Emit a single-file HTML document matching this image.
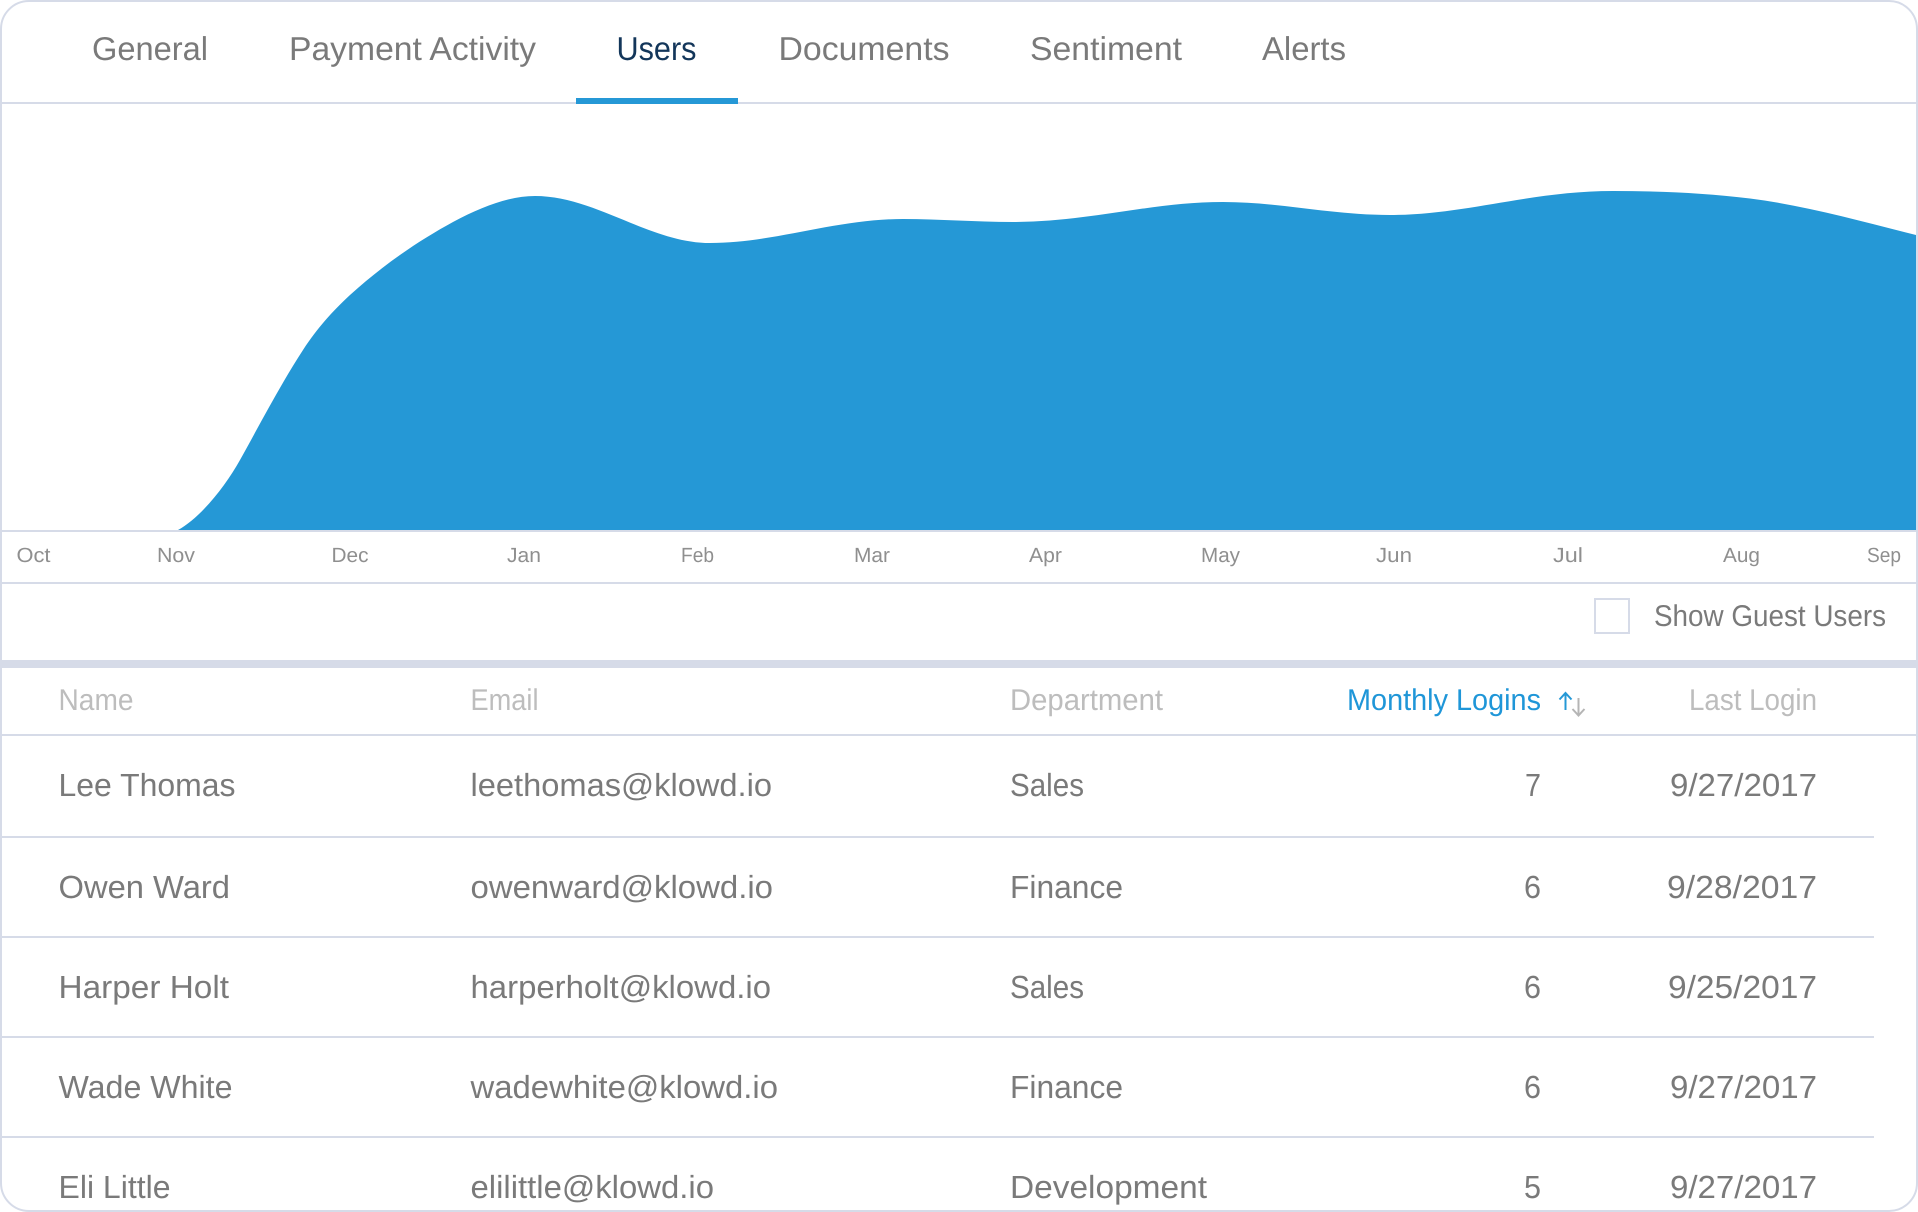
<!DOCTYPE html>
<html lang="en">
<head>
<meta charset="utf-8">
<title>Users</title>
<style>
html,body{margin:0;padding:0;background:#fff;width:1918px;height:1212px;overflow:hidden}
svg{display:block}
text{font-family:"Liberation Sans",sans-serif;fill:#757575;text-rendering:geometricPrecision}
.tab{font-size:33px;fill:#7a7a7a}
.lab{font-size:20.5px;fill:#8f8f8f}
.hd{font-size:30px;fill:#bdbdbd}
.row{font-size:32px;fill:#7a7a7a}
</style>
</head>
<body>
<svg width="1918" height="1212" viewBox="0 0 1918 1212" xmlns="http://www.w3.org/2000/svg">
<defs><clipPath id="card"><rect x="1" y="1" width="1916" height="1210" rx="28" ry="28"/></clipPath></defs>
<rect width="1918" height="1212" fill="#fff"/>
<g clip-path="url(#card)">
<path fill="#2598d6" d="M178 530C200 518 225 487 240 460C260 424 282 382 303 350C318 327 332 312 350 295C384 264 420 240 453 222C483 206 510 196 535 196C595 196 650 243 710 243C775 243 835 219 903 219C940 219 975 222 1013 222C1090 222 1150 202 1223 202C1280 202 1330 215 1390 215C1465 215 1530 191 1613 191C1660 191 1705 193 1750 198.5C1805 205.5 1860 221 1916 235L1916 530Z"/>
<g fill="#d6dbe8">
<rect x="0" y="102" width="1918" height="2"/>
<rect x="0" y="530" width="1918" height="2"/>
<rect x="0" y="582" width="1918" height="2"/>
<rect x="0" y="660" width="1918" height="8"/>
<rect x="0" y="734" width="1918" height="2"/>
<rect x="0" y="836" width="1874" height="2"/>
<rect x="0" y="936" width="1874" height="2"/>
<rect x="0" y="1036" width="1874" height="2"/>
<rect x="0" y="1136" width="1874" height="2"/>
</g>
<rect x="576" y="98" width="162" height="6" fill="#2598d6"/>
</g>
<rect x="1" y="1" width="1916" height="1210" rx="28" ry="28" fill="none" stroke="#d6dbe8" stroke-width="2"/>

<text class="tab" x="92" y="60" textLength="116" lengthAdjust="spacingAndGlyphs">General</text>
<text class="tab" x="289" y="60" textLength="247" lengthAdjust="spacingAndGlyphs">Payment Activity</text>
<text class="tab" x="616.5" y="60" textLength="80" lengthAdjust="spacingAndGlyphs" style="fill:#13365a">Users</text>
<text class="tab" x="778.5" y="60" textLength="171" lengthAdjust="spacingAndGlyphs">Documents</text>
<text class="tab" x="1030" y="60" textLength="152" lengthAdjust="spacingAndGlyphs">Sentiment</text>
<text class="tab" x="1262" y="60" textLength="84" lengthAdjust="spacingAndGlyphs">Alerts</text>

<text class="lab" x="16.5" y="562" textLength="34" lengthAdjust="spacingAndGlyphs">Oct</text>
<text class="lab" x="157" y="562" textLength="38" lengthAdjust="spacingAndGlyphs">Nov</text>
<text class="lab" x="331.5" y="562" textLength="37" lengthAdjust="spacingAndGlyphs">Dec</text>
<text class="lab" x="507" y="562" textLength="34" lengthAdjust="spacingAndGlyphs">Jan</text>
<text class="lab" x="681" y="562" textLength="33" lengthAdjust="spacingAndGlyphs">Feb</text>
<text class="lab" x="854" y="562" textLength="36" lengthAdjust="spacingAndGlyphs">Mar</text>
<text class="lab" x="1029" y="562" textLength="33" lengthAdjust="spacingAndGlyphs">Apr</text>
<text class="lab" x="1201" y="562" textLength="39" lengthAdjust="spacingAndGlyphs">May</text>
<text class="lab" x="1376" y="562" textLength="36" lengthAdjust="spacingAndGlyphs">Jun</text>
<text class="lab" x="1553" y="562" textLength="30" lengthAdjust="spacingAndGlyphs">Jul</text>
<text class="lab" x="1723" y="562" textLength="37" lengthAdjust="spacingAndGlyphs">Aug</text>
<text class="lab" x="1867" y="562" textLength="34" lengthAdjust="spacingAndGlyphs">Sep</text>

<rect x="1595" y="599" width="34" height="34" fill="#fff" stroke="#d6dbe8" stroke-width="2"/>
<text x="1654" y="626" font-size="30" textLength="232" lengthAdjust="spacingAndGlyphs" style="fill:#7a7a7a">Show Guest Users</text>

<text class="hd" x="58.5" y="710" textLength="75" lengthAdjust="spacingAndGlyphs">Name</text>
<text class="hd" x="470.5" y="710" textLength="68" lengthAdjust="spacingAndGlyphs">Email</text>
<text class="hd" x="1010" y="710" textLength="153" lengthAdjust="spacingAndGlyphs">Department</text>
<text class="hd" x="1347" y="710" textLength="194" lengthAdjust="spacingAndGlyphs" style="fill:#1f96d8">Monthly Logins</text>
<text class="hd" x="1689" y="710" textLength="128" lengthAdjust="spacingAndGlyphs">Last Login</text>

<g fill="none" stroke-width="2">
<path d="M1565.5 693V710M1559.5 699.5L1565.5 693L1571.5 699.5" stroke="#2598d6"/>
<path d="M1578.5 698V715M1572.5 709L1578.5 715.5L1584.5 709" stroke="#b5b5b5"/>
</g>

<text class="row" x="58.5" y="796" textLength="177" lengthAdjust="spacingAndGlyphs">Lee Thomas</text>
<text class="row" x="470.5" y="796" textLength="301.5" lengthAdjust="spacingAndGlyphs">leethomas@klowd.io</text>
<text class="row" x="1010" y="796" textLength="74" lengthAdjust="spacingAndGlyphs">Sales</text>
<text class="row" x="1525" y="796" textLength="16" lengthAdjust="spacingAndGlyphs">7</text>
<text class="row" x="1670" y="796" textLength="147" lengthAdjust="spacingAndGlyphs">9/27/2017</text>

<text class="row" x="58.5" y="898" textLength="171.5" lengthAdjust="spacingAndGlyphs">Owen Ward</text>
<text class="row" x="470.5" y="898" textLength="302.5" lengthAdjust="spacingAndGlyphs">owenward@klowd.io</text>
<text class="row" x="1010" y="898" textLength="113" lengthAdjust="spacingAndGlyphs">Finance</text>
<text class="row" x="1524" y="898" textLength="17" lengthAdjust="spacingAndGlyphs">6</text>
<text class="row" x="1667" y="898" textLength="150" lengthAdjust="spacingAndGlyphs">9/28/2017</text>

<text class="row" x="58.5" y="998" textLength="170.5" lengthAdjust="spacingAndGlyphs">Harper Holt</text>
<text class="row" x="470.5" y="998" textLength="300.5" lengthAdjust="spacingAndGlyphs">harperholt@klowd.io</text>
<text class="row" x="1010" y="998" textLength="74" lengthAdjust="spacingAndGlyphs">Sales</text>
<text class="row" x="1524" y="998" textLength="17" lengthAdjust="spacingAndGlyphs">6</text>
<text class="row" x="1668" y="998" textLength="149" lengthAdjust="spacingAndGlyphs">9/25/2017</text>

<text class="row" x="58.5" y="1098" textLength="174" lengthAdjust="spacingAndGlyphs">Wade White</text>
<text class="row" x="470.5" y="1098" textLength="307.5" lengthAdjust="spacingAndGlyphs">wadewhite@klowd.io</text>
<text class="row" x="1010" y="1098" textLength="113" lengthAdjust="spacingAndGlyphs">Finance</text>
<text class="row" x="1524" y="1098" textLength="17" lengthAdjust="spacingAndGlyphs">6</text>
<text class="row" x="1670" y="1098" textLength="147" lengthAdjust="spacingAndGlyphs">9/27/2017</text>

<text class="row" x="58.5" y="1198" textLength="112" lengthAdjust="spacingAndGlyphs">Eli Little</text>
<text class="row" x="470.5" y="1198" textLength="243.5" lengthAdjust="spacingAndGlyphs">elilittle@klowd.io</text>
<text class="row" x="1010" y="1198" textLength="197" lengthAdjust="spacingAndGlyphs">Development</text>
<text class="row" x="1524" y="1198" textLength="17" lengthAdjust="spacingAndGlyphs">5</text>
<text class="row" x="1670" y="1198" textLength="147" lengthAdjust="spacingAndGlyphs">9/27/2017</text>
</svg>
</body>
</html>
